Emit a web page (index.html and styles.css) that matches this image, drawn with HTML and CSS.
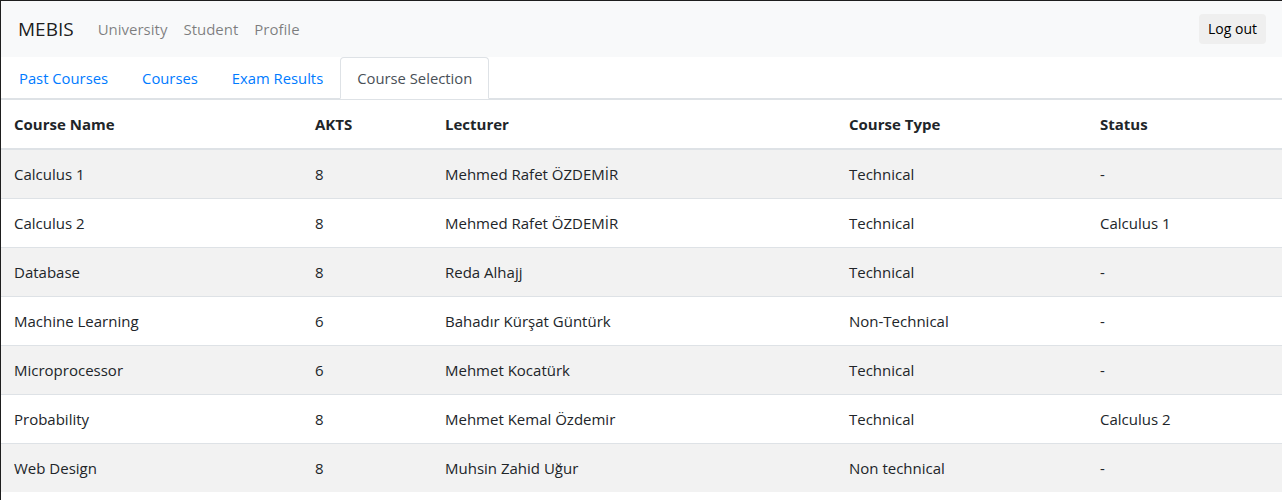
FILE: index.html
```html
<!DOCTYPE html>
<html lang="en">
<head>
<meta charset="utf-8">
<title>MEBIS</title>
<link rel="stylesheet" href="styles.css">
</head>
<body>
<div class="page">
  <nav class="navbar">
    <div class="nav-left">
      <a class="brand" href="#">MEBIS</a>
      <a class="nav-link" href="#">University</a>
      <a class="nav-link" href="#">Student</a>
      <a class="nav-link" href="#">Profile</a>
    </div>
    <button class="logout" type="button">Log out</button>
  </nav>
  <ul class="tabs">
    <li><a class="tab" href="#">Past Courses</a></li>
    <li><a class="tab" href="#">Courses</a></li>
    <li><a class="tab" href="#">Exam Results</a></li>
    <li><a class="tab active" href="#">Course Selection</a></li>
  </ul>
  <table class="courses">
    <colgroup>
      <col class="c-name">
      <col class="c-akts">
      <col class="c-lect">
      <col class="c-type">
      <col class="c-status">
    </colgroup>
    <thead>
      <tr><th>Course Name</th><th>AKTS</th><th>Lecturer</th><th>Course Type</th><th>Status</th></tr>
    </thead>
    <tbody>
      <tr><td>Calculus 1</td><td>8</td><td>Mehmed Rafet ÖZDEMİR</td><td>Technical</td><td>-</td></tr>
      <tr><td>Calculus 2</td><td>8</td><td>Mehmed Rafet ÖZDEMİR</td><td>Technical</td><td>Calculus 1</td></tr>
      <tr><td>Database</td><td>8</td><td>Reda Alhajj</td><td>Technical</td><td>-</td></tr>
      <tr><td>Machine Learning</td><td>6</td><td>Bahadır Kürşat Güntürk</td><td>Non-Technical</td><td>-</td></tr>
      <tr><td>Microprocessor</td><td>6</td><td>Mehmet Kocatürk</td><td>Technical</td><td>-</td></tr>
      <tr><td>Probability</td><td>8</td><td>Mehmet Kemal Özdemir</td><td>Technical</td><td>Calculus 2</td></tr>
      <tr><td>Web Design</td><td>8</td><td>Muhsin Zahid Uğur</td><td>Non technical</td><td>-</td></tr>
    </tbody>
  </table>
</div>
</body>
</html>
```
FILE: styles.css
```css
* { box-sizing: border-box; }
html, body { margin: 0; padding: 0; background: #fff; }
body {
  font-family: "Open Sans", "Noto Sans", "DejaVu Sans", sans-serif;
  font-size: 15px;
  line-height: 24px;
  color: #212529;
}
a { text-decoration: none; }
.page {
  min-height: 100vh;
  border-top: 1px solid #1e1e1e;
  border-left: 1px solid #1e1e1e;
}
.navbar {
  display: flex;
  align-items: center;
  justify-content: space-between;
  height: 56px;
  padding: 8px 16px 8px 17px;
  background: #f8f9fa;
}
.nav-left { display: flex; align-items: center; }
.brand {
  font-size: 19px;
  line-height: 30px;
  padding: 5px 0;
  margin-right: 16px;
  color: rgba(0, 0, 0, 0.9);
}
.nav-link {
  padding: 0 8px;
  color: rgba(0, 0, 0, 0.5);
}
.logout {
  font-family: inherit;
  font-size: 14px;
  line-height: 20px;
  padding: 5px 9px;
  border: none;
  border-radius: 4px;
  background: #efefef;
  color: #000;
}
.tabs {
  display: flex;
  list-style: none;
  margin: 0;
  padding: 0 0 0 1px;
  border-bottom: 1px solid #dee2e6;
  font-size: 14.8px;
}
.tabs li { margin-bottom: -1px; }
.tab {
  display: block;
  padding: 8px 16px;
  border: 1px solid transparent;
  border-top-left-radius: 4px;
  border-top-right-radius: 4px;
  color: #007bff;
}
.tab.active {
  color: #495057;
  background: #fff;
  border-color: #dee2e6 #dee2e6 #fff;
}
.courses {
  width: 100%;
  border-collapse: collapse;
  table-layout: fixed;
}
.c-name { width: 301px; }
.c-akts { width: 130px; }
.c-lect { width: 404px; }
.c-type { width: 251px; }
.c-status { width: auto; }
.courses th, .courses td {
  padding: 12px 12px 12px 13px;
  text-align: left;
  vertical-align: top;
  border-top: 1px solid #dee2e6;
}
.courses th {
  font-weight: 700;
  border-bottom: 2px solid #dee2e6;
}
.courses tbody tr:nth-child(odd) { background: rgba(0, 0, 0, 0.05); }
```
